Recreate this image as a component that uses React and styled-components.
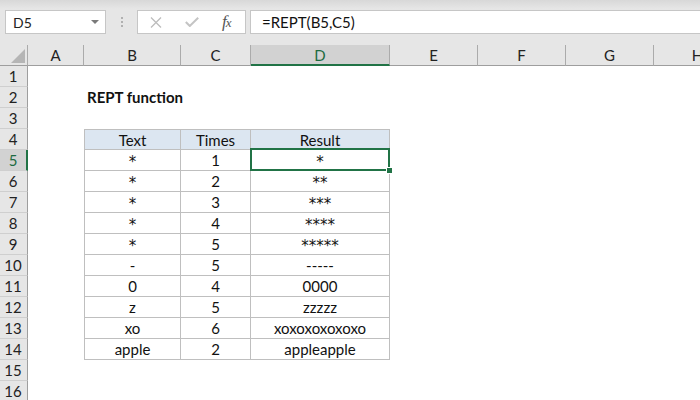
import React from 'react';
import styled, { createGlobalStyle } from 'styled-components';

const GlobalStyle = createGlobalStyle`
  html, body {
    margin: 0;
    padding: 0;
    background: #fff;
  }
  body {
    font-family: Lato, "Liberation Sans", sans-serif;
  }
`;

const GREEN = '#217346';

const Window = styled.div`
  width: 700px;
  height: 400px;
  overflow: hidden;
  display: flex;
  flex-direction: column;
  background: #fff;
`;

const FormulaBar = styled.div`
  height: 45px;
  flex: none;
  box-sizing: border-box;
  display: flex;
  align-items: flex-start;
  padding: 10px 0 0 5px;
  background: linear-gradient(#d8d8d8 0, #e6e6e6 9px);
`;

const NameBox = styled.div`
  width: 101px;
  height: 24px;
  box-sizing: border-box;
  border: 1px solid #c6c6c6;
  background: #fff;
  display: flex;
  align-items: center;
  justify-content: space-between;
  padding: 0 6px 0 7px;
  font-size: 14px;
  color: #222;
`;

const Grip = styled.div`
  width: 31px;
  height: 24px;
  display: flex;
  flex-direction: column;
  align-items: center;
  justify-content: center;
  gap: 2px;

  span {
    width: 2px;
    height: 2px;
    background: #b0b0b0;
  }
`;

const FxBox = styled.div`
  width: 109px;
  height: 24px;
  box-sizing: border-box;
  border: 1px solid #c6c6c6;
  background: #fff;
  display: flex;
  align-items: center;
  padding-left: 12px;
  gap: 23px;
`;

const Fx = styled.span`
  font-family: "Liberation Serif", serif;
  font-style: italic;
  font-size: 17px;
  color: #555;
  letter-spacing: -1px;

  small {
    font-size: 13px;
  }
`;

const FormulaInput = styled.div`
  flex: 1;
  margin-left: 4px;
  height: 24px;
  box-sizing: border-box;
  border: 1px solid #c6c6c6;
  border-right: none;
  background: #fff;
  padding-left: 11px;
  font-size: 15px;
  line-height: 22px;
  color: #111;
`;

const Sheet = styled.div`
  display: grid;
  grid-template-columns: 28px 56px 97px 70px 139px 88px 88px 88px 88px;
  grid-auto-rows: 21px;
  font-size: 15px;
  color: #111;
`;

const Corner = styled.div`
  background: #e6e6e6;
  box-sizing: border-box;
  border-right: 1px solid #ababab;
  border-bottom: 1px solid #9e9e9e;
  display: flex;
  align-items: flex-end;
  justify-content: flex-end;
  padding: 0 2px 2px 0;
`;

const ColHead = styled.div`
  box-sizing: border-box;
  background: ${p => (p.$active ? '#d2d2d2' : '#e6e6e6')};
  border-right: 1px solid #ababab;
  border-bottom: ${p => (p.$active ? `2px solid ${GREEN}` : '1px solid #9e9e9e')};
  color: ${p => (p.$active ? '#1d6b41' : '#222')};
  text-align: center;
  line-height: 20px;
`;

const RowHead = styled.div`
  box-sizing: border-box;
  background: ${p => (p.$active ? '#d2d2d2' : '#e6e6e6')};
  border-right: ${p => (p.$active ? `2px solid ${GREEN}` : '1px solid #9e9e9e')};
  border-bottom: 1px solid #cfcfcf;
  color: ${p => (p.$active ? '#1d6b41' : '#222')};
  text-align: center;
  line-height: 20px;
  padding-right: ${p => (p.$active ? '0' : '1px')};
`;

const Cell = styled.div`
  position: relative;
  box-sizing: border-box;
  background: ${p => (p.$head ? '#dce6f1' : '#fff')};
  white-space: nowrap;
  line-height: 20px;
  text-align: ${p => (p.$title ? 'left' : 'center')};
  padding-left: ${p => (p.$title ? '3px' : '0')};
  font-weight: ${p => (p.$title ? 700 : 400)};
  z-index: ${p => (p.$title || p.$selected ? 2 : 0)};
  ${p =>
    p.$boxed &&
    `
    border-right: 1px solid #bfbfbf;
    border-bottom: 1px solid #bfbfbf;
  `}
  ${p => p.$first && 'border-left: 1px solid #bfbfbf;'}
  ${p => p.$top && 'border-top: 1px solid #bfbfbf;'}

  ${p =>
    p.$selected &&
    `
    &::after {
      content: '';
      position: absolute;
      left: -1px;
      top: -2px;
      right: -1px;
      bottom: -1px;
      border: 2px solid ${GREEN};
    }
    &::before {
      content: '';
      position: absolute;
      right: -4px;
      bottom: -4px;
      width: 5px;
      height: 5px;
      background: ${GREEN};
      border: 1px solid #fff;
      z-index: 3;
    }
  `}
`;

// Calibri's asterisk is larger than Lato's, so stars get their own face
const Stars = styled.span`
  font-family: "DejaVu Sans", sans-serif;
  font-size: 15px;
  position: relative;
  top: 1px;
`;

const columns = ['A', 'B', 'C', 'D', 'E', 'F', 'G', 'H'];

const data = [
  ['*', '1', '*'],
  ['*', '2', '**'],
  ['*', '3', '***'],
  ['*', '4', '****'],
  ['*', '5', '*****'],
  ['-', '5', '-----'],
  ['0', '4', '0000'],
  ['z', '5', 'zzzzz'],
  ['xo', '6', 'xoxoxoxoxoxo'],
  ['apple', '2', 'appleapple'],
];

const Caret = () => (
  <svg width="8" height="4" viewBox="0 0 8 4">
    <path d="M0 0h8L4 4z" fill="#7a7a7a" />
  </svg>
);

const CancelIcon = () => (
  <svg width="12" height="11" viewBox="0 0 12 11">
    <path d="M1 0.5l10 10M11 0.5l-10 10" stroke="#bdbdbd" strokeWidth="1.3" fill="none" />
  </svg>
);

const CheckIcon = () => (
  <svg width="14" height="10" viewBox="0 0 14 10">
    <path d="M0.8 5l4 4L13.2 0.8" stroke="#c4c4c4" strokeWidth="2" fill="none" />
  </svg>
);

const SelectAll = () => (
  <svg width="14" height="14" viewBox="0 0 14 14">
    <path d="M14 0v14H0z" fill="#b5b5b5" />
  </svg>
);

function cellFor(row, colIdx) {
  const col = columns[colIdx];
  const key = `${col}${row}`;
  if (row === 2 && col === 'B') {
    return <Cell key={key} $title>REPT function</Cell>;
  }
  const inTable = row >= 4 && row <= 14 && colIdx >= 1 && colIdx <= 3;
  if (!inTable) return <Cell key={key} />;

  const idx = colIdx - 1;
  const text = row === 4 ? ['Text', 'Times', 'Result'][idx] : data[row - 5][idx];
  return (
    <Cell
      key={key}
      $boxed
      $head={row === 4}
      $top={row === 4}
      $first={idx === 0}
      $selected={row === 5 && col === 'D'}
    >
      {/^\*+$/.test(text) ? <Stars>{text}</Stars> : text}
    </Cell>
  );
}

export default function App() {
  const rows = Array.from({ length: 16 }, (_, i) => i + 1);

  return (
    <Window>
      <GlobalStyle />
      <FormulaBar>
        <NameBox>
          D5
          <Caret />
        </NameBox>
        <Grip>
          <span />
          <span />
          <span />
        </Grip>
        <FxBox>
          <CancelIcon />
          <CheckIcon />
          <Fx>
            f<small>x</small>
          </Fx>
        </FxBox>
        <FormulaInput>=REPT(B5,C5)</FormulaInput>
      </FormulaBar>

      <Sheet>
        <Corner>
          <SelectAll />
        </Corner>
        {columns.map(c => (
          <ColHead key={c} $active={c === 'D'}>
            {c}
          </ColHead>
        ))}
        {rows.map(r => (
          <React.Fragment key={r}>
            <RowHead $active={r === 5}>{r}</RowHead>
            {columns.map((_, ci) => cellFor(r, ci))}
          </React.Fragment>
        ))}
      </Sheet>
    </Window>
  );
}
